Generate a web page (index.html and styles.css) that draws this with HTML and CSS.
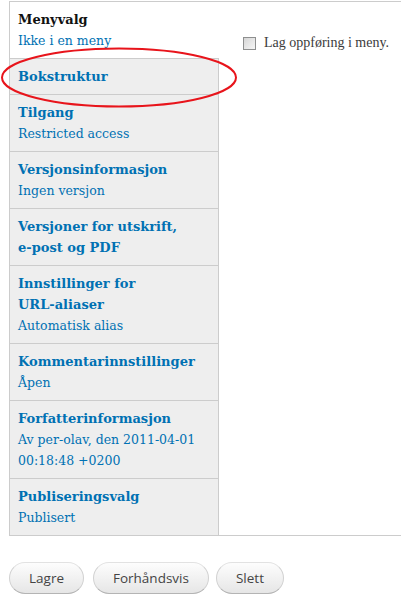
FILE: index.html
```html
<!DOCTYPE html>
<html lang="no">
<head>
  <meta charset="UTF-8">
  <meta name="viewport" content="width=device-width, initial-scale=1.0">
  <title>Vertikale faner</title>
  <link rel="stylesheet" href="styles.css">
</head>
<body>

<div class="page">
  <div class="vertical-tabs">
    <ul class="tabs-list">
      <li class="tab selected">
        <a href="#"><strong>Menyvalg</strong><span class="summary">Ikke i en meny</span></a>
      </li>
      <li class="tab">
        <a href="#"><strong>Bokstruktur</strong></a>
      </li>
      <li class="tab">
        <a href="#"><strong>Tilgang</strong><span class="summary">Restricted access</span></a>
      </li>
      <li class="tab">
        <a href="#"><strong>Versjonsinformasjon</strong><span class="summary">Ingen versjon</span></a>
      </li>
      <li class="tab">
        <a href="#"><strong>Versjoner for utskrift, <span class="nw">e-post</span> og PDF</strong></a>
      </li>
      <li class="tab">
        <a href="#"><strong>Innstillinger for <span class="nw">URL-aliaser</span></strong><span class="summary">Automatisk alias</span></a>
      </li>
      <li class="tab">
        <a href="#"><strong>Kommentarinnstillinger</strong><span class="summary">Åpen</span></a>
      </li>
      <li class="tab">
        <a href="#"><strong>Forfatterinformasjon</strong><span class="summary">Av per-olav, den 2011-04-01 00:18:48 +0200</span></a>
      </li>
      <li class="tab last">
        <a href="#"><strong>Publiseringsvalg</strong><span class="summary">Publisert</span></a>
      </li>
    </ul>

    <div class="tab-pane">
      <label class="check">
        <input type="checkbox">
        <span>Lag oppføring i meny.</span>
      </label>
    </div>
  </div>

  <div class="form-actions">
    <button type="button">Lagre</button>
    <button type="button" class="wide">Forhåndsvis</button>
    <button type="button" class="last">Slett</button>
  </div>

  <!-- markering tegnet over skjermbildet -->
  <svg class="marker" width="401" height="120" viewBox="0 0 401 120">
    <ellipse cx="119" cy="77.5" rx="117" ry="29" fill="none" stroke="#e8141b" stroke-width="2"/>
  </svg>
</div>

</body>
</html>
```

FILE: styles.css
```css
html, body {
  margin: 0;
  padding: 0;
  background-color: #fff;
  overflow: hidden;
}

body {
  font-family: 'DejaVu Serif', Georgia, serif;
  font-size: 13px;
}

.page {
  position: relative;
  padding: 1px 0 0 9px;
}

.vertical-tabs {
  display: flex;
  border-top: 1px solid #ccc;
  border-bottom: 1px solid #ccc;
  border-left: 1px solid #ccc;
}

.tabs-list {
  list-style: none;
  margin: 0;
  padding: 0;
  width: 209px;
  flex: none;
  background-color: #eee;
}

.tab {
  border-top: 1px solid #ccc;
  border-right: 1px solid #ccc;
}

.tab:first-child {
  border-top: none;
}

.tab a {
  display: block;
  padding: 7px 8px;
  line-height: 21px;
  color: #0071b3;
  text-decoration: none;
}

.tab strong {
  display: block;
  font-weight: bold;
}

.tab .nw {
  white-space: nowrap;
}

.tab .summary {
  display: block;
  font-size: 12.5px;
}

.tab.selected {
  background-color: #fff;
  border-right-color: #fff;
}

.tab.selected strong {
  color: #111;
}

.tab-pane {
  flex: 1;
  padding: 33px 0 0 24px;
}

.check {
  display: flex;
  align-items: center;
  gap: 8px;
  color: #3b3b3b;
  font-family: 'Liberation Serif', 'Times New Roman', serif;
  font-size: 14px;
  line-height: 16px;
  white-space: nowrap;
}

.check input {
  appearance: none;
  -webkit-appearance: none;
  margin: 0;
  width: 13px;
  height: 13px;
  flex: none;
  border: 1px solid #8e8f8f;
  background: linear-gradient(135deg, #d6d6d6, #f6f6f6);
  box-sizing: border-box;
}

.form-actions {
  display: flex;
  padding-top: 26px;
}

button {
  font-family: 'Open Sans', 'DejaVu Sans', sans-serif;
  font-size: 13.5px;
  color: #444;
  line-height: 18px;
  padding: 6px 19px;
  margin-right: 9px;
  border: 1px solid #d2d2d2;
  border-top-color: #e2e2e2;
  border-bottom-color: #b4b4b4;
  border-radius: 16px;
  background: linear-gradient(#fdfdfd, #e6e6e6);
  cursor: pointer;
}

button.wide {
  margin-right: 7px;
}

.marker {
  position: absolute;
  top: 0;
  left: 0;
  pointer-events: none;
}
```
